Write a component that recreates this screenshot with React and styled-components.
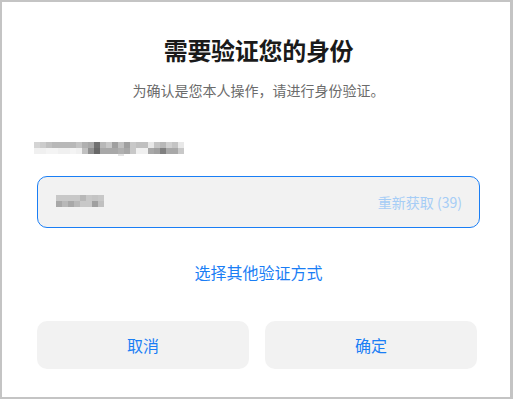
import React from "react";
import styled, { createGlobalStyle } from "styled-components";

const Global = createGlobalStyle`
  html, body { margin: 0; padding: 0; background: #ffffff; }
  body { font-family: "Noto Sans CJK SC", "Noto Sans", sans-serif; }
  * { box-sizing: border-box; }
`;

const Dialog = styled.div`
  width: 513px;
  height: 399px;
  border-style: solid;
  border-color: #c4c4c4;
  border-width: 2px 3px 2px 2px;
  background: #ffffff;
  display: flex;
  flex-direction: column;
  padding: 32px 30px 0 35px;
`;

const Title = styled.h1`
  margin: 0;
  font-size: 24px;
  line-height: 32px;
  font-weight: 700;
  color: #1a1a1a;
  text-align: center;
  letter-spacing: -0.3px;
`;

const Subtitle = styled.p`
  margin: 14px 0 0;
  font-size: 14px;
  line-height: 20px;
  color: #6b6b6b;
  text-align: center;
`;

const Mosaic = styled.div`
  display: flex;
  flex-direction: column;
  margin: ${(p) => p.$margin || "0"};
  align-self: ${(p) => p.$align || "auto"};
`;

const MosaicRow = styled.div`
  display: flex;
  height: 6px;
`;

const Cell = styled.span`
  display: block;
  width: 6px;
  height: 6px;
  background: ${(p) => p.$c};
`;

const Tail = styled.span`
  display: block;
  width: 6px;
  height: 2px;
  margin-left: ${(p) => p.$offset}px;
  background: #e4e4e4;
`;

const Field = styled.div`
  margin-top: 20px;
  height: 52px;
  border: 1px solid #1a7ef5;
  border-radius: 10px;
  background: #f2f2f2;
  display: flex;
  align-items: center;
  justify-content: space-between;
  padding: 0 17px 0 16px;
`;

const Resend = styled.span`
  font-size: 14px;
  color: #a6cdf6;
  line-height: 20px;
`;

const Link = styled.a`
  margin-top: 32px;
  font-size: 16px;
  line-height: 24px;
  color: #1a7ef5;
  text-align: center;
  text-decoration: none;
  cursor: pointer;
`;

const Actions = styled.div`
  margin-top: 37px;
  display: grid;
  grid-template-columns: 1fr 1fr;
  gap: 16px;
  padding-right: 3px;
`;

const Button = styled.button`
  height: 48px;
  border: none;
  border-radius: 10px;
  background: #f2f2f2;
  color: #1a7ef5;
  font-family: "Noto Sans CJK SC", "Noto Sans", sans-serif;
  font-size: 16px;
  cursor: pointer;
`;

const g = (v) => `rgb(${v},${v},${v})`;

const emailRows = [
  [0xd4, 0xcc, 0xc0, 0xb8, 0xb8, 0xb8, 0xb8, 0xc4, 0xb0, 0xa8, 0x70, 0xb8, 0xc8, 0xa0, 0xc0, 0xa0, 0xc8, 0xc0, 0xc0, 0xe8, 0xc4, 0xb8, 0xd0, 0xc4, 0xe8],
  [0xf0, 0xf0, 0xf4, 0xf4, 0xf0, 0xf0, 0xf4, 0xf0, 0xc0, 0x90, 0x68, 0xa8, 0xa8, 0xa8, 0xb0, 0xa8, 0xc8, 0xf0, 0xf0, 0xa8, 0xa0, 0x80, 0xa8, 0xa8, 0xc8],
];

const codeRows = [
  [0xc8, 0xc8, 0xc8, 0xc8, 0xb8, 0xc8, 0xc4, 0xc8],
  [0xa8, 0xb8, 0xa8, 0xb8, 0xc8, 0xc8, 0xa0, 0xc0],
];

function MaskedText({ rows, margin, align, tail }) {
  return (
    <Mosaic $margin={margin} $align={align} aria-label="已隐藏">
      {rows.map((row, i) => (
        <MosaicRow key={i}>
          {row.map((v, j) => (
            <Cell key={j} $c={g(v)} />
          ))}
        </MosaicRow>
      ))}
      {tail != null && <Tail $offset={tail} />}
    </Mosaic>
  );
}

export default function App() {
  return (
    <>
      <Global />
      <Dialog>
        <Title>需要验证您的身份</Title>
        <Subtitle>为确认是您本人操作，请进行身份验证。</Subtitle>
        <MaskedText rows={emailRows} margin="42px 0 0 -3px" align="flex-start" tail={84} />
        <Field>
          <MaskedText rows={codeRows} margin="0 0 2px 2px" />
          <Resend>重新获取 (39)</Resend>
        </Field>
        <Link>选择其他验证方式</Link>
        <Actions>
          <Button>取消</Button>
          <Button>确定</Button>
        </Actions>
      </Dialog>
    </>
  );
}
